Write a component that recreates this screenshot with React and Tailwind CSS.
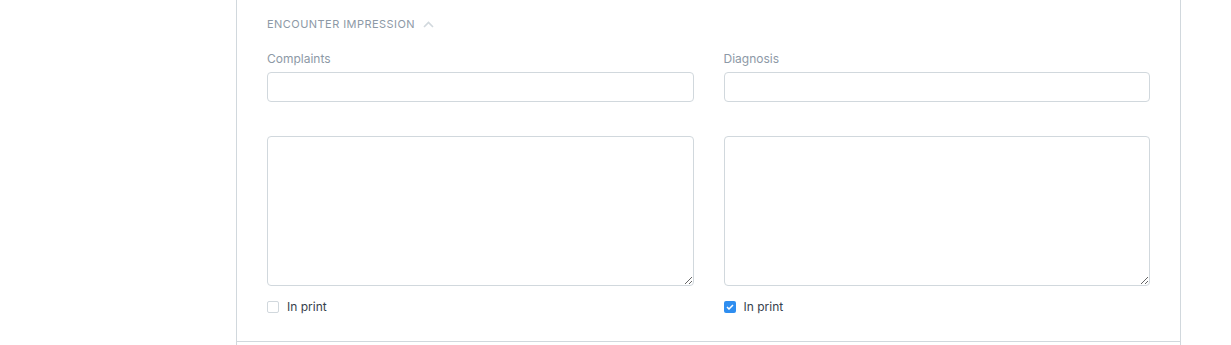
import React, { useState } from "react";

const Field = ({ label, checked }) => {
  const [inPrint, setInPrint] = useState(checked);
  return (
    <div className="flex flex-col">
      <label className="text-[12px] leading-[18px] text-[#8d99a6] mb-[4px]">{label}</label>
      <input type="text" className="h-[30px] w-full rounded-[4px] border border-[#d1d8dd] bg-white px-2 text-[12px] outline-none" />
      <textarea className="mt-[34px] h-[150px] w-full rounded-[4px] border border-[#d1d8dd] bg-white px-2 py-1 text-[12px] outline-none resize-y" />
      <label
        className="mt-[12px] flex items-center gap-[8px] text-[12px] leading-[18px] text-[#36414c] cursor-pointer"
        onClick={() => setInPrint(!inPrint)}
      >
        {inPrint ? (
          <span className="flex h-[12px] w-[12px] items-center justify-center rounded-[2px] bg-[#2f8ef0]">
            <svg width="8" height="6" viewBox="0 0 8 6" fill="none">
              <path d="M1 3L3 5L7 1" stroke="white" strokeWidth="1.5" />
            </svg>
          </span>
        ) : (
          <span className="h-[12px] w-[12px] rounded-[2px] border border-[#d1d8dd] bg-white" />
        )}
        <span>In print</span>
      </label>
    </div>
  );
};

export default function App() {
  return (
    <div className="flex h-[345px] w-full overflow-hidden bg-white font-['Inter',sans-serif]">
      <div className="w-[236px] shrink-0" />
      <div className="w-[945px] shrink-0 border-x border-[#d1d8dd]">
        <section className="border-b border-[#d1d8dd] px-[30px] pt-[16px] pb-[25px]">
          <div className="flex items-center gap-[8px] mb-[18px]">
            <h2 className="text-[11px] leading-[16px] tracking-[0.45px] uppercase text-[#8d99a6] font-normal">
              Encounter Impression
            </h2>
            <svg width="11" height="7" viewBox="0 0 11 7" fill="none" className="mt-[1px]">
              <path d="M1 6L5.5 1.5L10 6" stroke="#d1d8dd" strokeWidth="1.6" />
            </svg>
          </div>
          <div className="grid grid-cols-2 gap-[30px]">
            <Field label="Complaints" checked={false} />
            <Field label="Diagnosis" checked={true} />
          </div>
        </section>
      </div>
    </div>
  );
}
